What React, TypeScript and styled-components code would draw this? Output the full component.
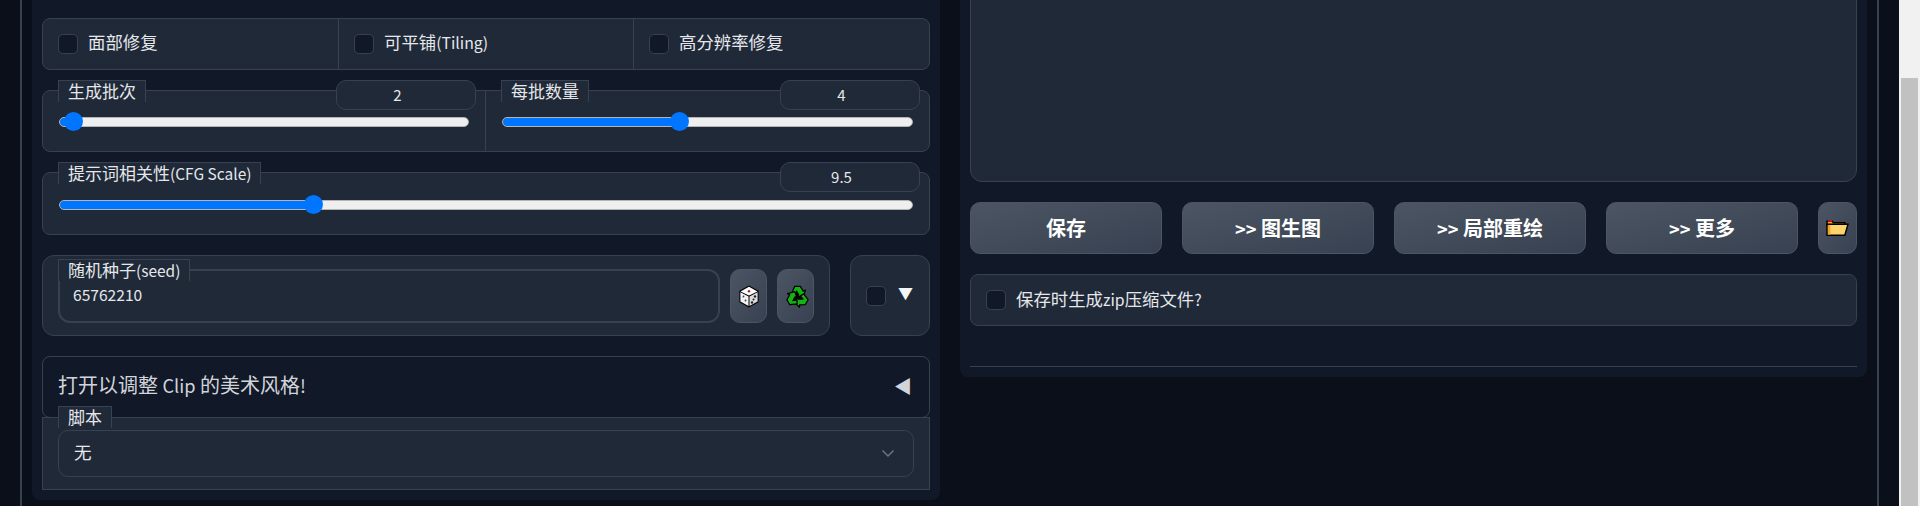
import React from "react";
import styled, { createGlobalStyle } from "styled-components";

const GlobalStyle = createGlobalStyle`
  html, body {
    margin: 0;
    height: 100%;
    overflow: hidden;
    background: #0b0f19;
  }
  * {
    box-sizing: border-box;
  }
  body, input {
    font-family: "Noto Sans CJK SC", "Noto Sans", sans-serif;
    color: #e5e7eb;
  }
`;

const Page = styled.div`
  display: flex;
  width: 1920px;
  height: 506px;
  overflow: hidden;
  padding-left: 20px;
`;

const Frame = styled.main`
  display: grid;
  grid-template-columns: 908px 907px;
  gap: 20px;
  align-items: start;
  width: 1859px;
  height: 506px;
  padding: 0 10px;
  border-left: 2px solid #374151;
  border-right: 2px solid #374151;
`;

const ScrollTrack = styled.div`
  width: 21px;
  height: 506px;
  margin-left: 20px;
  padding: 78px 2px 0;
  background: #f1f1f1;
`;

const ScrollThumb = styled.div`
  width: 17px;
  height: 100%;
  background: #c1c1c1;
`;

const Panel = styled.section<{ $top?: number }>`
  display: flex;
  flex-direction: column;
  gap: 20px;
  background: #111827;
  border-radius: 0 0 8px 8px;
  padding: ${(p) => p.$top ?? 0}px 10px 10px;
`;

const Block = styled.div<{ $h: number }>`
  position: relative;
  display: flex;
  height: ${(p) => p.$h}px;
  background: #1f2937;
  border: 1px solid #374151;
  border-radius: 8px;
`;

// narrower latin run, the reference sets these a bit smaller than the CJK
const Latin = styled.span`
  font-size: 0.91em;
`;

// the CJK metrics sit low in the line box, this nudges the text up
const Lift = styled.span<{ $by: number }>`
  margin-bottom: ${(p) => p.$by}px;
`;

const CheckCell = styled.label<{ $w?: number }>`
  display: flex;
  align-items: center;
  gap: 10px;
  flex: ${(p) => (p.$w ? `0 0 ${p.$w}px` : "1")};
  padding: 0 15px;
  font-size: 17.4px;
  color: #e5e7eb;
  & + & {
    border-left: 1px solid #374151;
  }
`;

const Check = styled.input.attrs({ type: "checkbox" })`
  appearance: none;
  flex: none;
  width: 20px;
  height: 20px;
  margin: 0;
  background: #111827;
  border: 1px solid #374151;
  border-radius: 5px;
`;

const SliderCell = styled.div<{ $w?: number; $top: number }>`
  position: relative;
  flex: ${(p) => (p.$w ? `0 0 ${p.$w}px` : "1")};
  padding: ${(p) => p.$top}px 16px 0;
  & + & {
    border-left: 1px solid #374151;
  }
`;

const FieldLabel = styled.span<{ $top?: number }>`
  position: absolute;
  left: 15px;
  top: ${(p) => p.$top ?? -11}px;
  height: 22px;
  padding: 0 9px;
  font-size: 17px;
  line-height: 19px;
  white-space: nowrap;
  color: #e5e7eb;
  background: #1f2937;
  border: 1px solid #374151;
  border-bottom: none;
`;

const NumberBox = styled.input.attrs({ type: "text", readOnly: true })<{
  $top: number;
  $right: number;
}>`
  position: absolute;
  right: ${(p) => p.$right}px;
  top: ${(p) => p.$top}px;
  width: 140px;
  height: 30px;
  padding: 0 17px 2px 0;
  text-align: center;
  font-size: 15px;
  color: #e5e7eb;
  background: #1f2937;
  border: 1px solid #374151;
  border-radius: 10px;
  outline: none;
`;

const Range = styled.input.attrs({ type: "range", readOnly: true })<{
  $pct: string;
}>`
  appearance: none;
  display: block;
  width: 100%;
  height: 19px;
  margin: 0;
  background: transparent;
  &::-webkit-slider-runnable-track {
    height: 10px;
    border-radius: 5px;
    border: 1px solid #b5b5b5;
    background: linear-gradient(
      to right,
      #0075ff ${(p) => p.$pct},
      #efefef ${(p) => p.$pct}
    );
  }
  &::-webkit-slider-thumb {
    appearance: none;
    width: 19px;
    height: 19px;
    margin-top: -5.5px;
    border: none;
    border-radius: 50%;
    background: #0075ff;
  }
`;

const SeedRow = styled.div`
  display: flex;
  gap: 20px;
`;

const SeedBlock = styled(Block)`
  flex: 1;
  gap: 10px;
  padding: 13px 15px;
  border-radius: 12px;
`;

const SeedField = styled.div`
  position: relative;
  flex: 1;
`;

const SeedInput = styled.input.attrs({ type: "text", readOnly: true })`
  display: block;
  width: 100%;
  height: 54px;
  padding: 0 13px 5px;
  font-size: 15.6px;
  color: #e5e7eb;
  background: #1f2937;
  border: 2px solid #374151;
  border-radius: 12px;
  outline: none;
`;

const SeedLabel = styled(FieldLabel)`
  left: 0;
  top: -10px;
`;

const IconButton = styled.button`
  display: flex;
  align-items: center;
  justify-content: center;
  flex: none;
  width: 37px;
  height: 54px;
  padding: 0;
  background: linear-gradient(to bottom right, #4b5563, #374151);
  border: 1px solid #4b5563;
  border-radius: 10px;
`;

const SmallBlock = styled(Block)`
  flex: 0 0 80px;
  align-items: center;
  gap: 12px;
  padding: 0 15px;
  border-radius: 12px;
`;

const Arrow = styled.span<{ $size: number; $color: string; $up: number }>`
  font-size: ${(p) => p.$size}px;
  line-height: 1;
  margin-bottom: ${(p) => p.$up}px;
  color: ${(p) => p.$color};
`;

const Stack = styled.div`
  display: flex;
  flex-direction: column;
`;

const Accordion = styled.div`
  display: flex;
  align-items: center;
  justify-content: space-between;
  height: 62px;
  padding: 0 17px 0 15px;
  font-size: 20px;
  color: #d1d5db;
  background: #111827;
  border: 1px solid #374151;
  border-radius: 8px;
`;

const ScriptBlock = styled.div`
  position: relative;
  height: 73px;
  margin-top: -1px;
  padding: 12px 15px 0;
  background: #1f2937;
  border: 1px solid #374151;
`;

const Select = styled.div`
  display: flex;
  align-items: center;
  justify-content: space-between;
  height: 47px;
  padding: 0 18px 0 15px;
  font-size: 17.6px;
  color: #e5e7eb;
  background: #1f2937;
  border: 1px solid #374151;
  border-radius: 10px;
`;

const OutputBox = styled.div`
  height: 202px;
  margin-top: -20px;
  background: #1f2937;
  border: 1px solid #374151;
  border-radius: 12px;
`;

const ActionRow = styled.div`
  display: flex;
  gap: 20px;
`;

const ActionButton = styled.button`
  flex: 0 0 192px;
  height: 52px;
  padding: 0 0 2px;
  font-family: inherit;
  font-size: 20px;
  font-weight: 700;
  color: #fff;
  background: linear-gradient(to bottom right, #4b5563, #374151);
  border: 1px solid #4b5563;
  border-radius: 10px;
`;

const FolderButton = styled(IconButton)`
  flex: 1;
  height: 52px;
`;

const Rule = styled.hr`
  width: 100%;
  margin: 20px 0 0;
  border: none;
  border-top: 1px solid #374151;
`;

const Chevron = () => (
  <svg width="14" height="9" viewBox="0 0 14 9" fill="none">
    <path d="M1.5 1.5 7 7l5.5-5.5" stroke="#6b7280" strokeWidth="1.5" />
  </svg>
);

const DiceIcon = () => (
  <svg width="20" height="23" viewBox="0 0 20 23">
    <path d="M10 .4 19.6 5.8v11.4L10 22.6.4 17.2V5.8z" fill="#000" />
    <path d="M10 1.8 18.4 6.4 10 10.6 1.6 6.4z" fill="#fff" />
    <path d="M1.4 7.2 9.5 11.4v9.6l-8.1-4.6z" fill="#f2f2f2" />
    <path d="M18.6 7.2 10.5 11.4v9.6l8.1-4.6z" fill="#dcdcdc" />
    <circle cx="10" cy="6.2" r="1.2" fill="#d01030" />
    <circle cx="4.5" cy="11.5" r=".9" fill="#444" />
    <circle cx="6.5" cy="15.5" r=".9" fill="#444" />
    <circle cx="13" cy="17.5" r="1.2" fill="#222" />
    <circle cx="16" cy="11.5" r="1.2" fill="#222" />
    <circle cx="14.5" cy="14.5" r="1" fill="#222" />
  </svg>
);

const recycleArrow = "M6 9 9 2h6l3 5 2.2-1.2-1.8 7.4-7.2-1 2.2-1.3-2.4-4L9.5 11z";

const RecycleIcon = () => (
  <svg width="23" height="24" viewBox="0 0 24 24" style={{ marginLeft: 3 }}>
    <circle cx="12" cy="13" r="5" fill="#000" />
    {[0, 120, 240].map((deg) => (
      <path
        key={deg}
        d={recycleArrow}
        transform={`rotate(${deg} 12 13)`}
        fill="#12b312"
        stroke="#000"
        strokeWidth="1.3"
        strokeLinejoin="round"
      />
    ))}
  </svg>
);

const FolderIcon = () => (
  <svg width="23" height="18" viewBox="0 0 22 17">
    <path d="M1 2h5l1 1.5h11V6H1z" fill="#f5a623" stroke="#000" strokeWidth="1.4" />
    <path d="M2 1h4v1.6H2z" fill="#e0102a" />
    <path
      d="M1 15.5V5h20l-3 10.5z"
      fill="#ffd36b"
      stroke="#000"
      strokeWidth="1.4"
      strokeLinejoin="miter"
    />
    <path d="M1.8 5.6h2.4v9.2H1.8z" fill="#f5a623" />
  </svg>
);

type SliderProps = {
  label: React.ReactNode;
  value: number;
  min: number;
  max: number;
  step?: number;
  width: number;
  top: number;
  boxRight: number;
};

const Slider = ({
  label,
  value,
  min,
  max,
  step = 1,
  width,
  top,
  boxRight,
}: SliderProps) => {
  // the blue part stops under the middle of the thumb
  const frac = (value - min) / (max - min);
  const pct = `${(9.5 + frac * (width - 19)).toFixed(1)}px`;
  return (
    <>
      <FieldLabel $top={top}>{label}</FieldLabel>
      <NumberBox value={String(value)} $top={top} $right={boxRight} />
      <Range min={min} max={max} step={step} value={value} $pct={pct} />
    </>
  );
};

export default function App() {
  return (
    <Page>
      <GlobalStyle />
      <Frame>
        <Panel $top={18}>
          <Block $h={52}>
            <CheckCell $w={295}>
              <Check />
              <Lift $by={5}>面部修复</Lift>
            </CheckCell>
            <CheckCell $w={295}>
              <Check />
              <Lift $by={5}>
                可平铺<Latin>(Tiling)</Latin>
              </Lift>
            </CheckCell>
            <CheckCell>
              <Check />
              <Lift $by={5}>高分辨率修复</Lift>
            </CheckCell>
          </Block>

          <Block $h={62}>
            <SliderCell $w={442} $top={21}>
              <Slider
                label="生成批次"
                value={2}
                min={1}
                max={100}
                width={410}
                top={-11}
                boxRight={9}
              />
            </SliderCell>
            <SliderCell $top={21}>
              <Slider
                label="每批数量"
                value={4}
                min={1}
                max={8}
                width={410}
                top={-11}
                boxRight={9}
              />
            </SliderCell>
          </Block>

          <Block $h={63}>
            <SliderCell $top={22}>
              <Slider
                label={
                  <>
                    提示词相关性<Latin>(CFG Scale)</Latin>
                  </>
                }
                value={9.5}
                min={1}
                max={30}
                step={0.5}
                width={854}
                top={-11}
                boxRight={9}
              />
            </SliderCell>
          </Block>

          <SeedRow>
            <SeedBlock $h={81}>
              <SeedField>
                <SeedLabel>
                  随机种子<Latin>(seed)</Latin>
                </SeedLabel>
                <SeedInput value="65762210" />
              </SeedField>
              <IconButton>
                <DiceIcon />
              </IconButton>
              <IconButton>
                <RecycleIcon />
              </IconButton>
            </SeedBlock>
            <SmallBlock $h={81}>
              <Check />
              <Arrow $size={15} $color="#f3f4f6" $up={6}>
                ▼
              </Arrow>
            </SmallBlock>
          </SeedRow>

          <Stack>
            <Accordion>
              <Lift $by={5}>
                打开以调整 <Latin>Clip</Latin> 的美术风格<Latin>!</Latin>
              </Lift>
              <Arrow $size={18} $color="#d1d5db" $up={4}>
                ◀
              </Arrow>
            </Accordion>
            <ScriptBlock>
              <FieldLabel $top={-12}>脚本</FieldLabel>
              <Select>
                <Lift $by={4}>无</Lift>
                <Chevron />
              </Select>
            </ScriptBlock>
          </Stack>
        </Panel>

        <Panel>
          <OutputBox />
          <ActionRow>
            <ActionButton>保存</ActionButton>
            <ActionButton>
              <Latin>&gt;&gt;</Latin> 图生图
            </ActionButton>
            <ActionButton>
              <Latin>&gt;&gt;</Latin> 局部重绘
            </ActionButton>
            <ActionButton>
              <Latin>&gt;&gt;</Latin> 更多
            </ActionButton>
            <FolderButton>
              <FolderIcon />
            </FolderButton>
          </ActionRow>
          <Block $h={52}>
            <CheckCell>
              <Check />
              <Lift $by={4}>
                保存时生成<Latin>zip</Latin>压缩文件<Latin>?</Latin>
              </Lift>
            </CheckCell>
          </Block>
          <Rule />
        </Panel>
      </Frame>
      <ScrollTrack>
        <ScrollThumb />
      </ScrollTrack>
    </Page>
  );
}
